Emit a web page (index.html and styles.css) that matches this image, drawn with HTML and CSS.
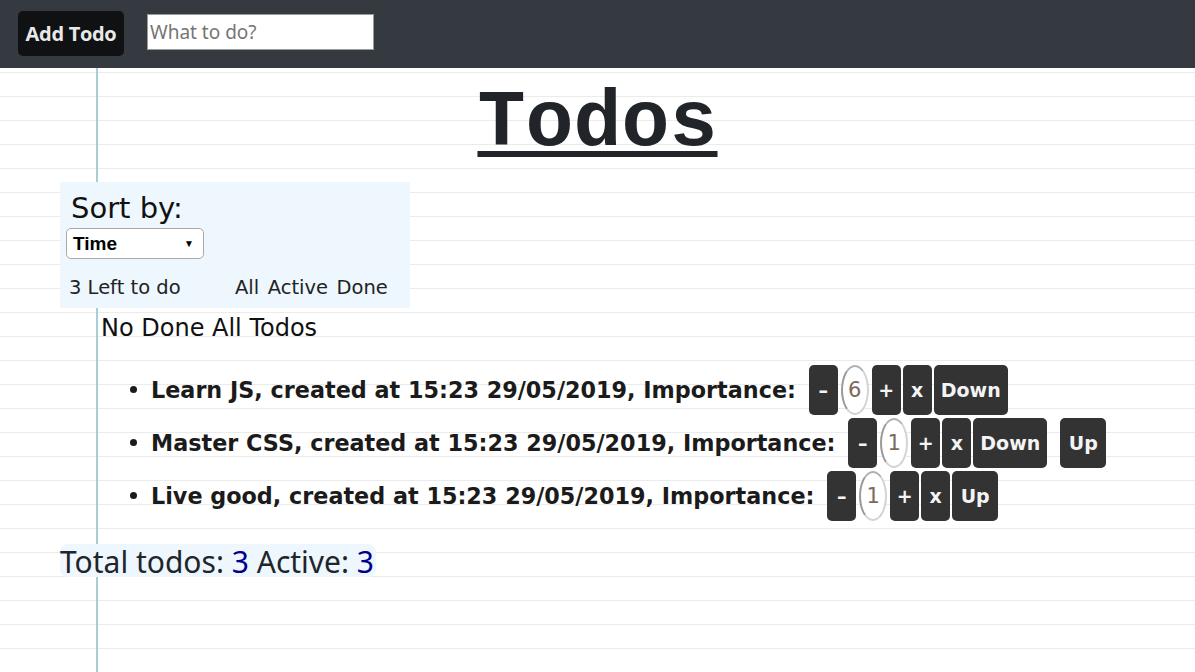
FILE: index.html
```html
<!DOCTYPE html>
<html>
<head>
<meta charset="utf-8">
<title>Todos</title>
<link rel="stylesheet" href="styles.css">
</head>
<body>
<header class="topbar">
  <button class="add-btn">Add Todo</button>
  <input class="new-todo" type="text" placeholder="What to do?">
</header>
<main class="paper">
  <h1 class="title">Todos</h1>
  <section class="sort-box">
    <div class="sort-label">Sort by:</div>
    <div class="select-wrap">
      <span class="select-value">Time</span>
      <span class="select-arrow">▼</span>
    </div>
    <div class="filters">
      <span class="left-count">3 Left to do</span>
      <span class="filter-links"><span>All</span><span>Active</span><span>Done</span></span>
    </div>
  </section>
  <div class="no-done">No Done All Todos</div>
  <ul class="todo-list">
    <li class="todo">
      <span class="todo-text">Learn JS, created at 15:23 29/05/2019, Importance:</span>
      <span class="controls">
        <span class="btn narrow">–</span><span class="imp">6</span><span class="btn narrow">+</span><span class="btn narrow">x</span><span class="btn wide">Down</span>
      </span>
    </li>
    <li class="todo">
      <span class="todo-text">Master CSS, created at 15:23 29/05/2019, Importance:</span>
      <span class="controls">
        <span class="btn narrow">–</span><span class="imp">1</span><span class="btn narrow">+</span><span class="btn narrow">x</span><span class="btn wide">Down</span><span class="btn up spaced">Up</span>
      </span>
    </li>
    <li class="todo">
      <span class="todo-text">Live good, created at 15:23 29/05/2019, Importance:</span>
      <span class="controls">
        <span class="btn narrow">–</span><span class="imp">1</span><span class="btn narrow">+</span><span class="btn narrow">x</span><span class="btn up">Up</span>
      </span>
    </li>
  </ul>
  <div class="totals">Total todos: <span class="num">3</span> Active: <span class="num">3</span></div>
</main>
</body>
</html>
```

FILE: styles.css
```css
html, body {
  margin: 0;
  padding: 0;
  height: 100%;
}
body {
  background: #ffffff;
  overflow: hidden;
}
.topbar {
  height: 68px;
  box-sizing: border-box;
  background: #343a40;
  display: flex;
  align-items: flex-start;
  padding: 11px 0 0 18px;
}
.add-btn {
  width: 106px;
  height: 45px;
  background: #101112;
  color: #e9e9e9;
  border: none;
  border-radius: 5px;
  font-family: "Open Sans", "Noto Sans", sans-serif;
  font-weight: 700;
  font-size: 20px;
  padding: 0;
  letter-spacing: -0.3px;
}
.new-todo {
  margin: 3px 0 0 23px;
  width: 227px;
  height: 36px;
  box-sizing: border-box;
  border: 1px solid #9a9a9a;
  padding: 0 2px;
  font-family: "Noto Sans", sans-serif;
  font-size: 19px;
  background: #fff;
  outline: none;
}
.new-todo::placeholder {
  color: #757575;
}
.paper {
  height: calc(100% - 68px);
  box-sizing: border-box;
  padding-top: 11px;
  background-image:
    linear-gradient(90deg, transparent 96px, #a8cdd3 96px, #a8cdd3 98px, transparent 98px),
    repeating-linear-gradient(180deg, transparent 0, transparent 4px, #ebebeb 4px, #ebebeb 5px, transparent 5px, transparent 24px);
  font-family: "DejaVu Sans", sans-serif;
  color: #1b1b1b;
}
.title {
  margin: 0;
  text-align: center;
  font-family: "Liberation Mono", monospace;
  font-weight: 700;
  font-size: 80px;
  line-height: 90px;
  color: #212529;
  text-decoration: underline;
  text-decoration-thickness: 6px;
  text-underline-offset: 6px;
}
.sort-box {
  margin: 13px 0 0 60px;
  width: 350px;
  height: 126px;
  box-sizing: border-box;
  background: #eef7fe;
  padding: 9px 0 0 6px;
}
.sort-label {
  font-size: 29px;
  line-height: 34px;
  padding-left: 5px;
  color: #111;
}
.select-wrap {
  margin-top: 3px;
  width: 138px;
  height: 31px;
  box-sizing: border-box;
  border: 1px solid #a9a9a9;
  border-radius: 5px;
  background: #fff;
  display: flex;
  align-items: center;
  justify-content: space-between;
  padding: 0 9px 0 6px;
  font-family: "Liberation Sans", Arial, sans-serif;
  font-weight: 700;
  font-size: 19px;
  color: #000;
}
.select-arrow {
  font-size: 10px;
}
.filters {
  margin-top: 17px;
  display: flex;
  font-size: 19.5px;
  line-height: 24px;
  padding-left: 3px;
  color: #222;
}
.left-count {
  width: 166px;
}
.filter-links {
  display: flex;
  gap: 8.5px;
}
.no-done {
  margin: 5px 0 0 101px;
  font-size: 24px;
  line-height: 30px;
  color: #111;
}
.todo-list {
  margin: 22px 0 0 0;
  padding-left: 151px;
}
.todo {
  height: 53px;
  font-size: 22.3px;
  font-weight: 700;
  color: #1b1b1b;
}
.todo-text {
  vertical-align: middle;
}
.controls {
  display: inline-flex;
  vertical-align: middle;
  margin-left: 5px;
  gap: 2px;
  align-items: stretch;
  height: 50px;
}
.btn {
  background: #333333;
  color: #f4f4f4;
  border-radius: 5px;
  display: flex;
  align-items: center;
  justify-content: center;
  font-size: 19px;
  font-weight: 700;
}
.narrow {
  width: 29px;
}
.wide {
  width: 74px;
}
.up {
  width: 46px;
}
.spaced {
  margin-left: 11px;
}
.imp {
  width: 28px;
  box-sizing: border-box;
  border: 2px solid #d4d4d4;
  border-left-color: #9a9a9a;
  border-top-color: #b0b0b0;
  border-radius: 50%;
  display: flex;
  align-items: center;
  justify-content: center;
  font-size: 21px;
  font-weight: 400;
  color: #7a6b5e;
  background: #fff;
  margin: 0 1px;
}
.totals {
  display: inline-block;
  margin: 20px 0 0 60px;
  padding: 0 2px 0 0;
  height: 33px;
  background: #eef7fe;
  border-radius: 8px;
  font-family: "Noto Sans", sans-serif;
  font-size: 30px;
  line-height: 35px;
  color: #212529;
}
.num {
  color: #00008b;
}
```
